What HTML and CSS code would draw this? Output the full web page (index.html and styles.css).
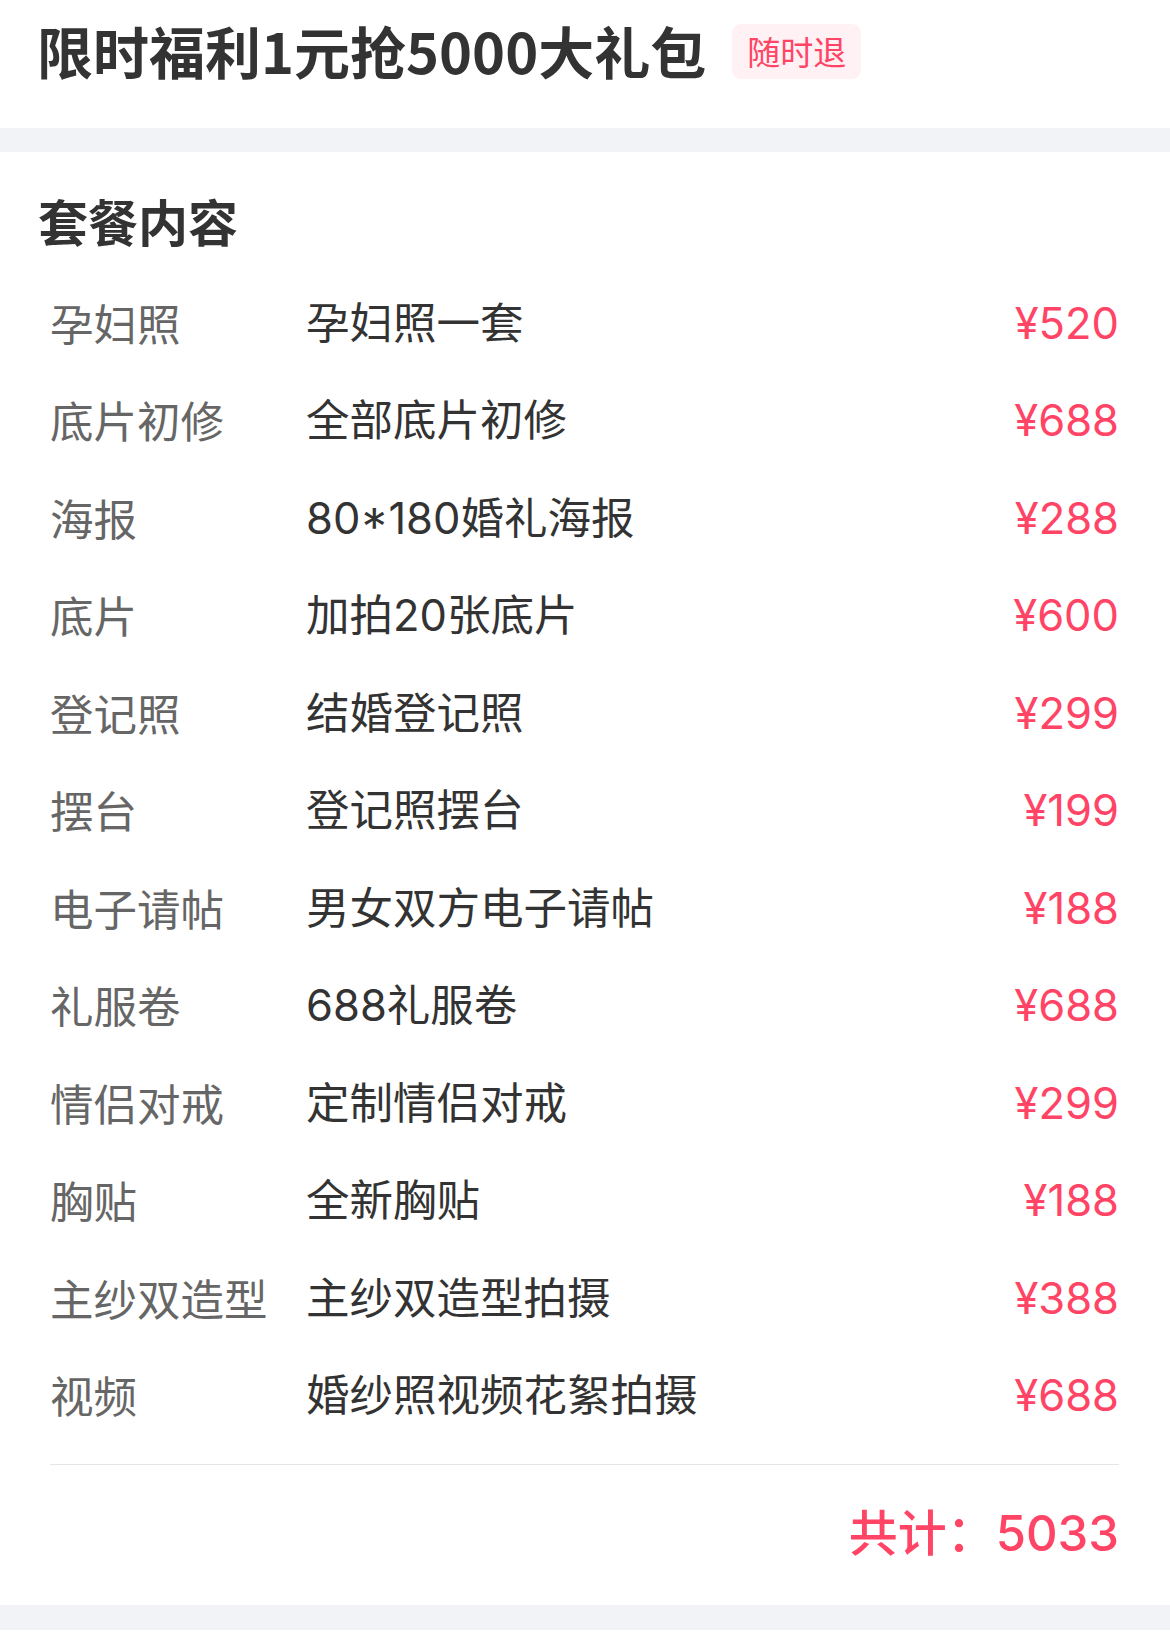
FILE: index.html
```html
<!DOCTYPE html>
<html lang="zh-CN">
<head>
<meta charset="utf-8">
<title>限时福利1元抢5000大礼包</title>
<link rel="stylesheet" href="styles.css">
</head>
<body>
<header class="header">
  <h1 class="title">限时福利1元抢5000大礼包</h1>
  <span class="badge">随时退</span>
</header>
<div class="gap"></div>
<section class="package">
  <h2 class="heading">套餐内容</h2>
  <ul class="items">
    <li class="item"><span class="label">孕妇照</span><span class="value">孕妇照一套</span><span class="price">¥520</span></li>
    <li class="item"><span class="label">底片初修</span><span class="value">全部底片初修</span><span class="price">¥688</span></li>
    <li class="item"><span class="label">海报</span><span class="value">80*180婚礼海报</span><span class="price">¥288</span></li>
    <li class="item"><span class="label">底片</span><span class="value">加拍20张底片</span><span class="price">¥600</span></li>
    <li class="item"><span class="label">登记照</span><span class="value">结婚登记照</span><span class="price">¥299</span></li>
    <li class="item"><span class="label">摆台</span><span class="value">登记照摆台</span><span class="price">¥199</span></li>
    <li class="item"><span class="label">电子请帖</span><span class="value">男女双方电子请帖</span><span class="price">¥188</span></li>
    <li class="item"><span class="label">礼服卷</span><span class="value">688礼服卷</span><span class="price">¥688</span></li>
    <li class="item"><span class="label">情侣对戒</span><span class="value">定制情侣对戒</span><span class="price">¥299</span></li>
    <li class="item"><span class="label">胸贴</span><span class="value">全新胸贴</span><span class="price">¥188</span></li>
    <li class="item"><span class="label">主纱双造型</span><span class="value">主纱双造型拍摄</span><span class="price">¥388</span></li>
    <li class="item"><span class="label">视频</span><span class="value">婚纱照视频花絮拍摄</span><span class="price">¥688</span></li>
  </ul>
  <div class="total">共计：5033</div>
</section>
<div class="gap gap-bottom"></div>
</body>
</html>
```
FILE: styles.css
```css
html, body {
  margin: 0;
  padding: 0;
  background: #ffffff;
}
body {
  font-family: "Noto Sans CJK SC", "Noto Sans", sans-serif;
  color: #333333;
}
.header {
  box-sizing: border-box;
  height: 128px;
  padding: 22px 40px 0 37px;
  display: flex;
  align-items: flex-start;
  gap: 26px;
}
.title {
  margin: 0;
  font-size: 56px;
  line-height: 56px;
  font-weight: 700;
  color: #333333;
  white-space: nowrap;
}
.badge {
  margin-top: 2px;
  height: 55px;
  line-height: 55px;
  padding: 0 15px;
  font-size: 33px;
  color: #ff4466;
  background: #fff1f4;
  border-radius: 9px;
}
.gap {
  height: 24px;
  background: #f2f3f7;
}
.gap-bottom {
  height: 25px;
}
.package {
  padding: 44px 51px 46px 50px;
}
.heading {
  margin: 0 0 0 -12px;
  font-size: 50px;
  line-height: 48px;
  font-weight: 700;
  color: #333333;
}
.items {
  list-style: none;
  margin: 30px 0 0;
  padding: 0 0 20px;
  border-bottom: 1px solid #e5e5e5;
}
.item {
  display: grid;
  grid-template-columns: 256px 1fr auto;
  align-items: center;
  height: 97.5px;
  font-size: 43.5px;
  line-height: 44px;
}
.label {
  color: #666666;
  white-space: nowrap;
}
.value {
  font-family: Inter, "Noto Sans CJK SC", sans-serif;
  color: #333333;
}
.price {
  font-family: Inter, "Noto Sans CJK SC", sans-serif;
  color: #ff4466;
  text-align: right;
}
.total {
  margin-top: 44px;
  text-align: right;
  font-family: Inter, "Noto Sans CJK SC", sans-serif;
  font-size: 49px;
  line-height: 50px;
  font-weight: 500;
  color: #ff4466;
}
```
